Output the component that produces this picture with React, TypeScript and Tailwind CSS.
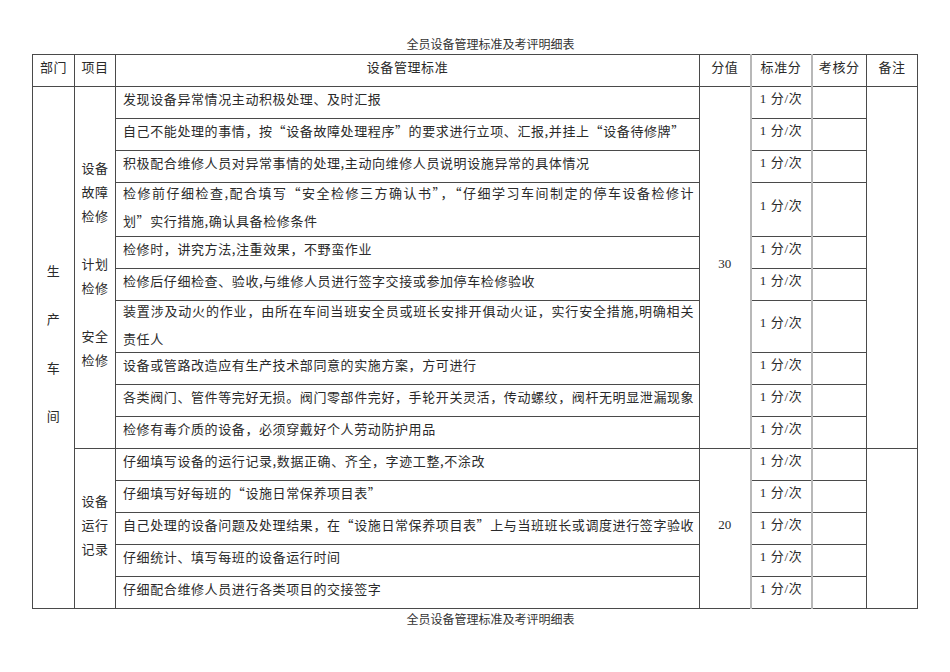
const TITLE = '全员设备管理标准及考评明细表'

interface Item {
    lines: string[]
    tall?: 'a' | 'b'
}

const repairItems: Item[] = [
    { lines: ['发现设备异常情况主动积极处理、及时汇报'] },
    { lines: ['自己不能处理的事情，按“设备故障处理程序”的要求进行立项、汇报,并挂上“设备待修牌”'] },
    { lines: ['积极配合维修人员对异常事情的处理,主动向维修人员说明设施异常的具体情况'] },
    {
        lines: ['检修前仔细检查,配合填写“安全检修三方确认书”，“仔细学习车间制定的停车设备检修计', '划”实行措施,确认具备检修条件'],
        tall: 'a',
    },
    { lines: ['检修时，讲究方法,注重效果，不野蛮作业'] },
    { lines: ['检修后仔细检查、验收,与维修人员进行签字交接或参加停车检修验收'] },
    {
        lines: ['装置涉及动火的作业，由所在车间当班安全员或班长安排开俱动火证，实行安全措施,明确相关', '责任人'],
        tall: 'b',
    },
    { lines: ['设备或管路改造应有生产技术部同意的实施方案，方可进行'] },
    { lines: ['各类阀门、管件等完好无损。阀门零部件完好，手轮开关灵活，传动螺纹，阀杆无明显泄漏现象'] },
    { lines: ['检修有毒介质的设备，必须穿戴好个人劳动防护用品'] },
]

const recordItems: Item[] = [
    { lines: ['仔细填写设备的运行记录,数据正确、齐全，字迹工整,不涂改'] },
    { lines: ['仔细填写好每班的“设施日常保养项目表”'] },
    { lines: ['自己处理的设备问题及处理结果，在“设施日常保养项目表”上与当班班长或调度进行签字验收'] },
    { lines: ['仔细统计、填写每班的设备运行时间'] },
    { lines: ['仔细配合维修人员进行各类项目的交接签字'] },
]

const cell = 'border border-[#4a4a4a] p-0 pb-[8px] leading-[20px] align-middle'
const light = 'border-x-2 border-x-[#b8b8b8]'

function rowHeight(item: Item) {
    if (item.tall === 'a') return 'h-[54px]'
    if (item.tall === 'b') return 'h-[52px]'
    return 'h-[32px]'
}

function Label({ lines }: { lines: string[] }) {
    return (
        <div className="flex flex-col items-center leading-[24px]">
            {lines.map((l, i) => (
                <div key={i} className="h-[24px]">{l}</div>
            ))}
        </div>
    )
}

function TextCell({ item }: { item: Item }) {
    if (!item.tall) {
        return <td className={`${cell} pl-[7px] text-left whitespace-nowrap`}>{item.lines[0]}</td>
    }
    return (
        <td className="border border-[#4a4a4a] p-0 pl-[7px] text-left align-top whitespace-nowrap">
            <div className="-mt-[4px] h-[44px] leading-[28px]">
                <div className="w-[571px] text-justify [text-align-last:justify]">{item.lines[0]}</div>
                <div>{item.lines[1]}</div>
            </div>
        </td>
    )
}

function ScoreCells() {
    return (
        <>
            <td className={`${cell} ${light} text-center font-['Liberation_Serif','Noto_Sans_CJK_SC',serif]`}>
                <span className="mr-[4px]">1</span>分/次
            </td>
            <td className={cell}></td>
        </>
    )
}

export default function App() {
    return (
        <div className="min-h-[672px] bg-white pt-[36px] text-[#2a2a2a] font-['Noto_Sans_CJK_SC',sans-serif]">
            <div className="ml-[32px] w-[885px]">
                <div className="mb-[2px] pl-[32px] text-center text-[12px] leading-[16px] text-[#333]">{TITLE}</div>

                <table className="w-[885px] table-fixed border-collapse text-[13px] tracking-[0.6px]">
                    <colgroup>
                        <col className="w-[42px]" />
                        <col className="w-[41px]" />
                        <col className="w-[584px]" />
                        <col className="w-[51px]" />
                        <col className="w-[61px]" />
                        <col className="w-[55px]" />
                        <col className="w-[51px]" />
                    </colgroup>
                    <thead>
                        <tr className="h-[32px]">
                            <th className={`${cell} font-normal`}>部门</th>
                            <th className={`${cell} font-normal`}>项目</th>
                            <th className={`${cell} font-normal`}>设备管理标准</th>
                            <th className={`${cell} font-normal`}>分值</th>
                            <th className={`${cell} ${light} font-normal`}>标准分</th>
                            <th className={`${cell} font-normal`}>考核分</th>
                            <th className={`${cell} font-normal`}>备注</th>
                        </tr>
                    </thead>
                    <tbody>
                        {repairItems.map((item, i) => (
                            <tr key={`r${i}`} className={rowHeight(item)}>
                                {i === 0 && (
                                    <>
                                        <td rowSpan={15} className={`${cell} text-center`}>
                                            <div className="flex flex-col items-center">
                                                {['生', '产', '车', '间'].map((c) => (
                                                    <div key={c} className="leading-[48.5px]">{c}</div>
                                                ))}
                                            </div>
                                        </td>
                                        <td rowSpan={10} className={`${cell} text-center`}>
                                            <Label lines={['设备', '故障', '检修', '', '计划', '检修', '', '安全', '检修']} />
                                        </td>
                                    </>
                                )}
                                <TextCell item={item} />
                                {i === 0 && (
                                    <td rowSpan={10} className={`${cell} text-center font-['Liberation_Serif',serif] tracking-normal`}>30</td>
                                )}
                                <ScoreCells />
                                {i === 0 && <td rowSpan={10} className={cell}></td>}
                            </tr>
                        ))}
                        {recordItems.map((item, i) => (
                            <tr key={`c${i}`} className={rowHeight(item)}>
                                {i === 0 && (
                                    <td rowSpan={5} className={`${cell} text-center`}>
                                        <Label lines={['设备', '运行', '记录']} />
                                    </td>
                                )}
                                <TextCell item={item} />
                                {i === 0 && (
                                    <td rowSpan={5} className={`${cell} text-center font-['Liberation_Serif',serif] tracking-normal`}>20</td>
                                )}
                                <ScoreCells />
                                {i === 0 && <td rowSpan={5} className={cell}></td>}
                            </tr>
                        ))}
                    </tbody>
                </table>

                <div className="mt-[2px] pl-[32px] text-center text-[12px] leading-[16px] text-[#333]">{TITLE}</div>
            </div>
        </div>
    )
}
